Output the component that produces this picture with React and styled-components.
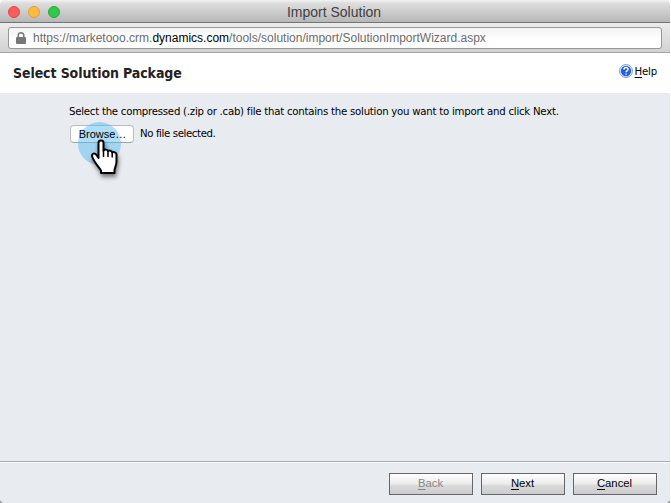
import React from "react";
import styled, { createGlobalStyle } from "styled-components";

const Global = createGlobalStyle`
  * { box-sizing: border-box; }
  html, body { margin: 0; overflow: hidden; background: #fff; }
`;

const humanist = `"DejaVu Sans Condensed", "DejaVu Sans", sans-serif`;
const grotesque = `"Liberation Sans", Arial, sans-serif`;

const Window = styled.div`
  position: relative;
  width: 670px;
  height: 503px;
  display: flex;
  flex-direction: column;
  background: #e8ebf0;
  border-radius: 5px 5px 0 0;
  overflow: hidden;
  font-family: ${humanist};
  color: #000;
  white-space: nowrap;
`;

const TitleBar = styled.div`
  height: 23px;
  flex: none;
  display: grid;
  grid-template-columns: 80px 1fr 82px;
  align-items: center;
  padding-top: 2px;
  border-bottom: 1px solid #747474;
  background: linear-gradient(#f3f3f3 0, #dedede 3px, #b7b7b7 100%);
`;

const Lights = styled.div`
  display: flex;
  gap: 8px;
  padding-left: 8px;
`;

const Light = styled.span`
  width: 12px;
  height: 12px;
  border-radius: 50%;
  background: ${(p) => p.$fill};
  border: 1px solid ${(p) => p.$edge};
`;

const Title = styled.div`
  font: 14px/20px ${grotesque};
  color: #404040;
  text-align: center;
`;

const Toolbar = styled.div`
  height: 30px;
  flex: none;
  padding: 4px 8px 0;
  border-bottom: 1px solid #a5a5a5;
  background: linear-gradient(#ececec, #d2d2d2);
`;

const Address = styled.div`
  height: 22px;
  display: flex;
  align-items: center;
  padding-left: 7px;
  gap: 7px;
  border: 1px solid #979797;
  border-radius: 3px;
  background: linear-gradient(#f4f4f4, #fff 60%);
  font: 12px/20px ${grotesque};
  color: #6b6b6b;
`;

const Domain = styled.span`
  color: #000;
`;

const Header = styled.header`
  height: 40px;
  flex: none;
  display: flex;
  align-items: center;
  justify-content: space-between;
  padding: 0 13px;
  background: #fff;
`;

const Heading = styled.h1`
  margin: 0;
  font: bold 14px/20px ${humanist};
  letter-spacing: -0.1px;
  color: #222;
`;

const Help = styled.div`
  display: flex;
  align-items: center;
  gap: 2px;
  margin-top: -4px;
  font-size: 11.3px;
  letter-spacing: -0.2px;
`;

const Key = styled.span`
  text-decoration: underline;
  text-underline-offset: 2px;
`;

const Content = styled.main`
  flex: 1;
  padding: 11px 0 0 69px;
  font-size: 11.3px;
  line-height: 16px;
  letter-spacing: -0.24px;
`;

const FileRow = styled.div`
  display: flex;
  align-items: center;
  gap: 6px;
  margin-top: 5px;
  height: 18px;
`;

const FileStatus = styled.span`
  letter-spacing: -0.38px;
`;

const Picker = styled.div`
  position: relative;
  width: 65px;
  height: 18px;
  padding-left: 1px;
`;

const BrowseButton = styled.button`
  display: block;
  width: 64px;
  height: 18px;
  padding: 0 0 1px 1px;
  border: 1px solid #b9bbc0;
  border-bottom-color: #a0a2a6;
  border-radius: 4px;
  background: #fff;
  font: 11px/14px ${grotesque};
  color: #000;
`;

const BrowseLabel = styled.span`
  position: relative;
  z-index: 1;
`;

const Halo = styled.span`
  position: absolute;
  left: 9px;
  top: -3px;
  width: 43px;
  height: 43px;
  border-radius: 50%;
  background: rgba(85, 187, 240, 0.48);
`;

const Hand = styled.svg`
  position: absolute;
  z-index: 2;
  left: 21px;
  top: 13px;
  overflow: visible;
  filter: drop-shadow(1px 3px 2px rgba(0, 0, 0, 0.5));
`;

const Footer = styled.footer`
  height: 42px;
  flex: none;
  display: flex;
  justify-content: flex-end;
  gap: 8px;
  padding: 11px 13px 0 0;
  border-top: 1px solid #a5acb5;
  box-shadow: inset 0 1px #fff;
`;

const WizardButton = styled.button`
  width: 84px;
  height: 22px;
  padding: 0 1px 2px 0;
  border: 1px solid #666;
  border-radius: 0;
  background: linear-gradient(#fff, #ececec 48%, #d8d8d8 60%, #cdcdcd);
  font: 11.3px/17px ${grotesque};
  color: ${(p) => (p.disabled ? "#858585" : "#000")};
`;

const Grip = styled.span`
  position: absolute;
  bottom: 0;
  ${(p) => p.$side}: 0;
  border-bottom: 3px solid #a4a7ab;
  border-${(p) => (p.$side === "left" ? "right" : "left")}: 3px solid transparent;
`;

const LockIcon = () => (
  <svg width="10" height="12" viewBox="0 0 10 12">
    <path d="M2.2 6V3.6a2.8 2.8 0 0 1 5.6 0V6" fill="none" stroke="#777" strokeWidth="1.5" />
    <rect x="0" y="5" width="10" height="7" rx="1" fill="#777" />
  </svg>
);

const HelpIcon = () => (
  <svg width="14" height="14" viewBox="0 0 14 14">
    <circle cx="7" cy="7" r="6.4" fill="#fff" stroke="#6d94d8" />
    <circle cx="7" cy="7" r="5.2" fill="#2860d0" />
    <path d="M5 5.5c0-2.6 4.1-2.6 4.1-.2 0 1.6-2.1 1.5-2.1 3M7 9.500v1.300" fill="none" stroke="#fff" strokeWidth="1.4" />
  </svg>
);

export default function App() {
  return (
    <Window>
      <Global />
      <TitleBar>
        <Lights>
          <Light $fill="#fc5b57" $edge="#df4744" />
          <Light $fill="#fdbc40" $edge="#dd9f34" />
          <Light $fill="#30c84a" $edge="#23a936" />
        </Lights>
        <Title>Import Solution</Title>
      </TitleBar>
      <Toolbar>
        <Address>
          <LockIcon />
          <span>
            https://marketooo.crm.<Domain>dynamics.com</Domain>/tools/solution/import/SolutionImportWizard.aspx
          </span>
        </Address>
      </Toolbar>
      <Header>
        <Heading>Select Solution Package</Heading>
        <Help>
          <HelpIcon />
          <span><Key>H</Key>elp</span>
        </Help>
      </Header>
      <Content>
        <div>
          Select the compressed (.zip or .cab) file that contains the solution you want to import and click Next.
        </div>
        <FileRow>
          <Picker>
            <BrowseButton><BrowseLabel>Browse…</BrowseLabel></BrowseButton>
            <Halo />
            <Hand width="28" height="37" viewBox="0 0 28 37">
              <path
                d="M8.500 5c0-3.300 5-3.300 5 0v7.500c.8-1.400 4.300-1.200 4.500.8 1-1.200 4-.8 4.200 1.200 1.200-1 4.300-.2 4.300 2.200v6.800c0 4-2 6.500-2 9v2.500H11v-2.500C9 29 4 24.500 2.200 18.500c-.8-3.200 2.600-4 4.300-1.500l2 3z"
                fill="#fff" stroke="#000" strokeWidth="2" strokeLinejoin="round"
              />
              <path d="M13.500 12v7M18 13v6M22.200 14.500v5" stroke="#000" strokeWidth="1.500" />
            </Hand>
          </Picker>
          <FileStatus>No file selected.</FileStatus>
        </FileRow>
      </Content>
      <Footer>
        <WizardButton disabled><Key>B</Key>ack</WizardButton>
        <WizardButton><Key>N</Key>ext</WizardButton>
        <WizardButton><Key>C</Key>ancel</WizardButton>
      </Footer>
      <Grip $side="left" />
      <Grip $side="right" />
    </Window>
  );
}
